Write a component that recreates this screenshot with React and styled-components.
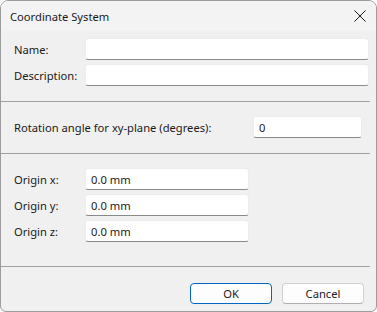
import React from "react";
import styled, { createGlobalStyle } from "styled-components";

const GlobalStyle = createGlobalStyle`
  html, body {
    margin: 0;
    padding: 0;
    background: #ffffff;
  }
  * {
    box-sizing: border-box;
  }
`;

const App = () => {
  return (
    <>
      <GlobalStyle />
      <Window>
        <TitleBar>
          <Title>Coordinate System</Title>
          <CloseButton aria-label="Close">
            <svg width="12" height="12" viewBox="0 0 12 12">
              <path d="M0.5 0.5 L11.5 11.5 M11.5 0.5 L0.5 11.5" stroke="#1b1b1b" strokeWidth="1" fill="none" />
            </svg>
          </CloseButton>
        </TitleBar>
        <Body>
          <Section $top={7} $bottom={15}>
            <Row>
              <Label $width={71}>Name:</Label>
              <Input $width={284} />
            </Row>
            <Row>
              <Label $width={71}>Description:</Label>
              <Input $width={284} />
            </Row>
          </Section>
          <Divider />
          <Section $top={14} $bottom={15}>
            <Row>
              <Label $width={239}>Rotation angle for xy-plane (degrees):</Label>
              <Input $width={109} defaultValue="0" />
            </Row>
          </Section>
          <Divider />
          <Section $top={14} $bottom={24}>
            <Row>
              <Label $width={71}>Origin x:</Label>
              <Input $width={164} defaultValue="0.0 mm" />
            </Row>
            <Row>
              <Label $width={71}>Origin y:</Label>
              <Input $width={164} defaultValue="0.0 mm" />
            </Row>
            <Row>
              <Label $width={71}>Origin z:</Label>
              <Input $width={164} defaultValue="0.0 mm" />
            </Row>
          </Section>
          <Divider />
          <Footer>
            <Button $primary>OK</Button>
            <Button>Cancel</Button>
          </Footer>
        </Body>
      </Window>
    </>
  );
};

const Window = styled.div`
  width: 377px;
  height: 312px;
  display: flex;
  flex-direction: column;
  background: #f0f0f0;
  border: 1px solid #9c9c9c;
  border-radius: 8px 8px 6px 6px;
  overflow: hidden;
  font-family: "Segoe UI", "Noto Sans", "Open Sans", sans-serif;
  font-size: 11.2px;
  color: #1a1a1a;
`;

const TitleBar = styled.div`
  height: 30px;
  flex: none;
  display: flex;
  align-items: center;
  justify-content: space-between;
  padding: 0 9px 0 9px;
  background: #f3f3f3;
`;

const Title = styled.span`
  font-size: 11.2px;
  color: #1a1a1a;
`;

const CloseButton = styled.div`
  width: 14px;
  height: 14px;
  display: flex;
  align-items: center;
  justify-content: center;
`;

const Body = styled.div`
  flex: 1;
  display: flex;
  flex-direction: column;
`;

const Section = styled.div`
  display: flex;
  flex-direction: column;
  gap: 4px;
  padding: ${(p) => p.$top}px 0 ${(p) => p.$bottom}px 13px;
`;

const Row = styled.div`
  display: flex;
  align-items: center;
`;

const Label = styled.label`
  width: ${(p) => p.$width}px;
  flex: none;
`;

const Input = styled.input`
  width: ${(p) => p.$width}px;
  flex: none;
  height: 22px;
  padding: 0 5px;
  border: 1px solid #ececec;
  border-bottom: 1px solid #8a8a8a;
  border-radius: 3px;
  background: #ffffff;
  font: inherit;
  color: #1a1a1a;
  outline: none;
`;

const Divider = styled.div`
  height: 1px;
  margin-right: 6px;
  background: #a0a0a0;
  flex: none;
`;

const Footer = styled.div`
  margin-top: auto;
  display: flex;
  justify-content: flex-end;
  gap: 10px;
  padding: 0 12px 7px 0;
`;

const Button = styled.button`
  width: 82px;
  height: 21px;
  padding: 0;
  font: inherit;
  color: #1a1a1a;
  background: #fdfdfd;
  border: 1px solid ${(p) => (p.$primary ? "#0067c0" : "#d0d0d0")};
  border-bottom-color: ${(p) => (p.$primary ? "#0067c0" : "#b0b0b0")};
  border-radius: 4px;
`;

export default App;
